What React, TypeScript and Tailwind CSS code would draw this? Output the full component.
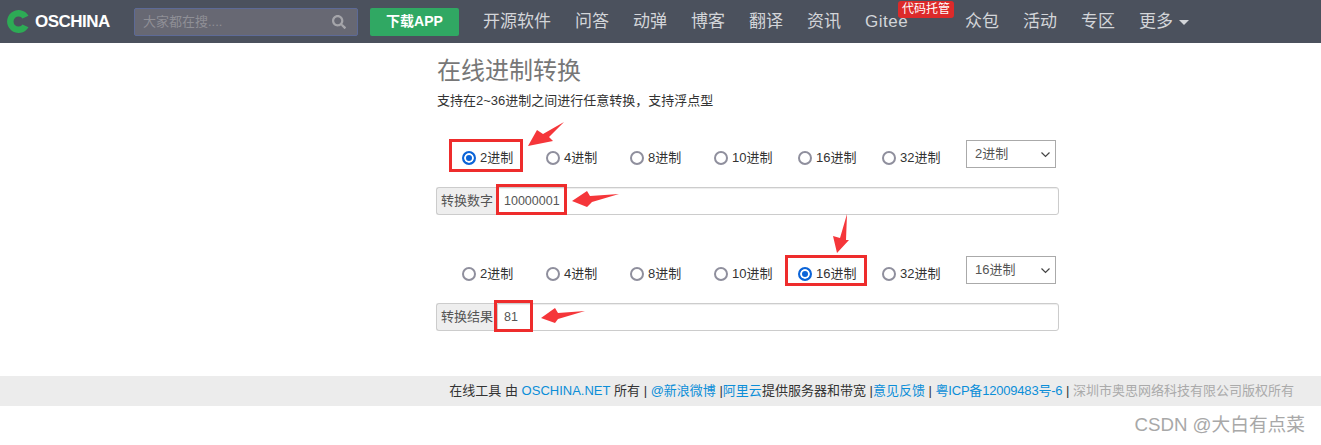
import React from 'react';
import { FaSearch } from 'react-icons/fa';

const NAV_ITEMS = ['开源软件', '问答', '动弹', '博客', '翻译', '资讯'];
const NAV_ITEMS_AFTER = ['众包', '活动', '专区'];
const BASES = [2, 4, 8, 10, 16, 32];

// Red boxes and arrows someone drew over the screenshot
const BOXES = [
  'left-[449px] top-[139px] w-[74px] h-[33px]',
  'left-[496px] top-[184px] w-[71px] h-[31px]',
  'left-[785px] top-[255px] w-[82px] h-[31px]',
  'left-[494px] top-[300px] w-[39px] h-[32px]',
];
const ARROWS = [
  '528,146 537,130 543,134 564,122 549,137 553,141',
  '572,201 587,191 590,196 619,194 592,202 587,207',
  '837,253 833,236 840,238 847,214 846,240 849,240',
  '541,318 555,308 558,313 585,311 558,319 555,323',
];

function BaseRow({ name, value }: { name: string; value: number }) {
  return (
    <div className="flex items-center h-[28px]">
      <div className="flex pl-[26px] w-[530px]">
        {BASES.map((base) => (
          <label key={base} className="flex items-center w-[84px] h-[28px] text-[13px] text-[#333] pt-[7px]">
            <input
              type="radio"
              name={name}
              defaultChecked={base === value}
              className="appearance-none w-[14px] h-[14px] m-0 mr-[4px] rounded-full border-2 border-[#8f8f9d] bg-white checked:border-[#0b64d8] checked:bg-[#0b64d8] checked:shadow-[inset_0_0_0_2px_white]"
            />
            {base}进制
          </label>
        ))}
      </div>
      <div className="relative w-[90px] h-[28px]">
        <select
          defaultValue={value}
          className="appearance-none w-full h-full pl-[8px] text-[13px] text-[#555] bg-white border border-[#aaa] rounded-none outline-none"
        >
          {BASES.map((base) => (
            <option key={base} value={base}>{base}进制</option>
          ))}
        </select>
        <svg className="absolute right-[6px] top-[12px] pointer-events-none" width="9" height="6" viewBox="0 0 9 6" fill="none">
          <path d="M0.5 0.5 L4.5 4.5 L8.5 0.5" stroke="#444" strokeWidth="1.2" />
        </svg>
      </div>
    </div>
  );
}

function InputGroup({ label, value }: { label: string; value: string }) {
  return (
    <div className="flex h-[28px] w-[623px]">
      <span className="flex items-center justify-center w-[61px] text-[13px] text-[#555] bg-[#eee] border border-[#ccc] border-r-0 rounded-l-[3px]">
        {label}
      </span>
      <input
        readOnly
        value={value}
        className="flex-1 px-[6px] pt-[1px] text-[12.5px] text-[#555] bg-white border border-[#ccc] rounded-r-[3px] shadow-[inset_0_1px_1px_rgba(0,0,0,0.075)] outline-none"
      />
    </div>
  );
}

export default function App() {
  return (
    <div className="relative h-[445px] overflow-hidden bg-white font-['Liberation_Sans','Noto_Sans_CJK_SC',sans-serif]">
      <header className="flex items-center h-[43px] bg-[#4b515d]">
        <div className="flex items-center w-[134px] pl-[7px]">
          <svg width="23" height="23" viewBox="0 0 23 23">
            <path d="M21.5 5.7 A11.5 11.5 0 1 0 21.5 17.3 L15.5 14.5 A5 5 0 1 1 15.5 8.5 Z" fill="#2dab55" />
          </svg>
          <span className="ml-[5px] text-[17px] font-bold tracking-[-0.5px] text-white">OSCHINA</span>
        </div>
        <div className="flex items-center justify-between w-[224px] h-[28px] pl-[8px] pr-[11px] bg-[#676873] border border-[#5d6a96] rounded-[2px]">
          <span className="text-[13px] text-[#8f8f96]">大家都在搜....</span>
          <FaSearch className="w-[14px] h-[14px] text-[#a5a5aa]" />
        </div>
        <button className="w-[89px] h-[28px] ml-[12px] text-[14px] font-bold text-white bg-[#30a863] rounded-[2px]">
          下载APP
        </button>
        <nav className="flex items-center ml-[24px] text-[17px] text-[#d3d5d9]">
          {NAV_ITEMS.map((item) => (
            <a key={item} className="mr-[24px]">{item}</a>
          ))}
          <a className="relative w-[100px] tracking-[0.5px]">
            Gitee
            <span className="absolute left-[33px] top-[-8px] flex items-center justify-center w-[56px] h-[17px] text-[12px] tracking-normal text-white bg-[#dc2a2a] rounded-[3px]">
              代码托管
            </span>
          </a>
          {NAV_ITEMS_AFTER.map((item) => (
            <a key={item} className="mr-[24px]">{item}</a>
          ))}
          <a className="flex items-center">
            更多
            <span className="ml-[6px] mt-[2px] border-x-[5px] border-x-transparent border-t-[5px] border-t-[#d3d5d9]" />
          </a>
        </nav>
      </header>

      <main className="ml-[436px] w-[623px]">
        <h1 className="mt-[11px] pl-[1px] text-[24px] leading-[34px] text-[#777]">在线进制转换</h1>
        <p className="mt-[4px] pl-[1px] text-[13px] leading-[18px] text-[#333]">支持在2~36进制之间进行任意转换，支持浮点型</p>
        <div className="mt-[30px]">
          <BaseRow name="from" value={2} />
        </div>
        <div className="mt-[19px]">
          <InputGroup label="转换数字" value="10000001" />
        </div>
        <div className="mt-[41px]">
          <BaseRow name="to" value={16} />
        </div>
        <div className="mt-[19px]">
          <InputGroup label="转换结果" value="81" />
        </div>
      </main>

      <footer className="flex items-center justify-end h-[30px] mt-[45px] pr-[27px] bg-[#ececec] text-[13px] text-[#333] whitespace-pre">
        在线工具 由 <a className="text-[#0b8ed8]">OSCHINA.NET</a> 所有 | <a className="text-[#0b8ed8]">@新浪微博</a> |<a className="text-[#0b8ed8]">阿里云</a>提供服务器和带宽 |<a className="text-[#0b8ed8]">意见反馈</a> | <a className="text-[#0b8ed8] tracking-[-0.2px]">粤ICP备12009483号-6</a> | <span className="text-[#aaa]">深圳市奥思网络科技有限公司版权所有</span>
      </footer>

      {BOXES.map((box) => (
        <div key={box} className={`absolute border-[3px] border-[#ee2c2c] pointer-events-none ${box}`} />
      ))}
      <svg className="absolute left-0 top-0 pointer-events-none" width="1321" height="445">
        {ARROWS.map((points) => (
          <polygon key={points} points={points} fill="#f5363a" />
        ))}
      </svg>
      <span className="absolute right-[16px] top-[413px] text-[18.7px] leading-[24px] text-[#a8a8a8]">CSDN @大白有点菜</span>
    </div>
  );
}
